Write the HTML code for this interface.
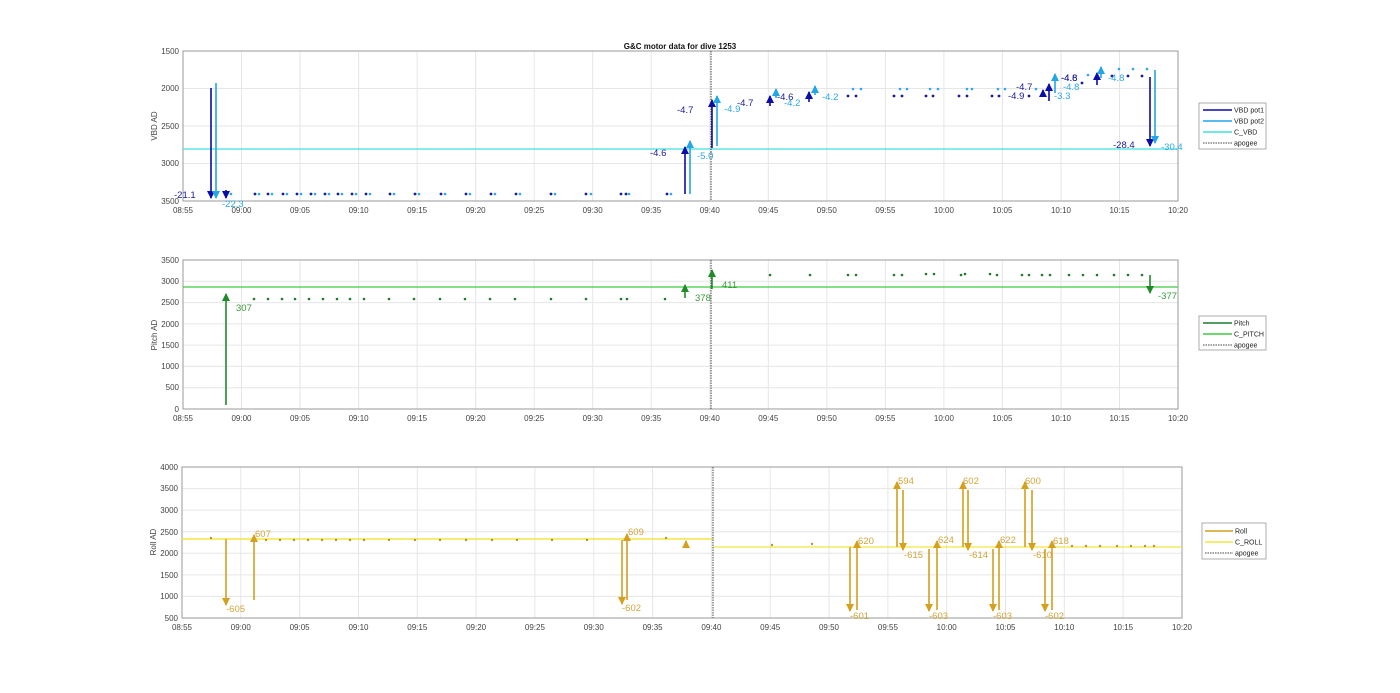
<!DOCTYPE html>
<html><head><meta charset="utf-8"><style>
html,body{margin:0;padding:0;background:#fff;}
svg{display:block;font-family:"Liberation Sans",sans-serif;}
.g{stroke:#e6e6e6;stroke-width:1;}
.ax{fill:none;stroke:#9a9a9a;stroke-width:1;}
.tl{font-size:8px;fill:#444;}
.yl{font-size:8px;fill:#444;text-anchor:end;}
.lg{font-size:7px;fill:#222;}
.db{fill:#1a1a9c;}.lb{fill:#2aa8e8;}
</style></head><body>
<svg width="1400" height="693" viewBox="0 0 1400 693">
<defs>
<marker id="mDB" markerWidth="8" markerHeight="8" refX="7" refY="4" orient="auto" markerUnits="userSpaceOnUse"><path d="M0,0 L8,4 L0,8 z" fill="#0c0ca8"/></marker>
<marker id="mLB" markerWidth="8" markerHeight="8" refX="7" refY="4" orient="auto" markerUnits="userSpaceOnUse"><path d="M0,0 L8,4 L0,8 z" fill="#22a6e6"/></marker>
<marker id="mG" markerWidth="8" markerHeight="8" refX="7" refY="4" orient="auto" markerUnits="userSpaceOnUse"><path d="M0,0 L8,4 L0,8 z" fill="#1f8a2a"/></marker>
<marker id="mR" markerWidth="8" markerHeight="8" refX="7" refY="4" orient="auto" markerUnits="userSpaceOnUse"><path d="M0,0 L8,4 L0,8 z" fill="#d4a01e"/></marker>
</defs>

<text x="680" y="49" font-size="8" font-weight="bold" text-anchor="middle" fill="#111">G&amp;C motor data for dive 1253</text>

<!-- ===== PLOT 1 ===== -->
<g class="g">
<line x1="241.5" y1="51" x2="241.5" y2="201"/><line x1="300" y1="51" x2="300" y2="201"/><line x1="358.6" y1="51" x2="358.6" y2="201"/><line x1="417.1" y1="51" x2="417.1" y2="201"/><line x1="475.6" y1="51" x2="475.6" y2="201"/><line x1="534.2" y1="51" x2="534.2" y2="201"/><line x1="592.7" y1="51" x2="592.7" y2="201"/><line x1="651.2" y1="51" x2="651.2" y2="201"/><line x1="709.8" y1="51" x2="709.8" y2="201"/><line x1="768.3" y1="51" x2="768.3" y2="201"/><line x1="826.8" y1="51" x2="826.8" y2="201"/><line x1="885.4" y1="51" x2="885.4" y2="201"/><line x1="943.9" y1="51" x2="943.9" y2="201"/><line x1="1002.4" y1="51" x2="1002.4" y2="201"/><line x1="1061" y1="51" x2="1061" y2="201"/><line x1="1119.5" y1="51" x2="1119.5" y2="201"/>
<line x1="183" y1="88.5" x2="1178" y2="88.5"/><line x1="183" y1="126" x2="1178" y2="126"/><line x1="183" y1="163.5" x2="1178" y2="163.5"/>
</g>
<rect class="ax" x="183" y="51" width="995" height="150"/>
<text class="yl" x="179" y="54">1500</text><text class="yl" x="179" y="91">2000</text><text class="yl" x="179" y="129">2500</text><text class="yl" x="179" y="166">3000</text><text class="yl" x="179" y="204">3500</text>
<text class="tl" transform="translate(157,126) rotate(-90)" text-anchor="middle">VBD AD</text>
<g class="tl" text-anchor="middle">
<text x="183" y="213">08:55</text><text x="241.5" y="213">09:00</text><text x="300" y="213">09:05</text><text x="358.6" y="213">09:10</text><text x="417.1" y="213">09:15</text><text x="475.6" y="213">09:20</text><text x="534.2" y="213">09:25</text><text x="592.7" y="213">09:30</text><text x="651.2" y="213">09:35</text><text x="709.8" y="213">09:40</text><text x="768.3" y="213">09:45</text><text x="826.8" y="213">09:50</text><text x="885.4" y="213">09:55</text><text x="943.9" y="213">10:00</text><text x="1002.4" y="213">10:05</text><text x="1061" y="213">10:10</text><text x="1119.5" y="213">10:15</text><text x="1178" y="213">10:20</text>
</g>
<line x1="183" y1="149" x2="1178" y2="149" stroke="#40e0e0" stroke-width="1.3"/>
<line x1="711" y1="51" x2="711" y2="201" stroke="#444" stroke-width="1" stroke-dasharray="1.5,1"/>
<!-- dots -->
<g class="db">
<circle cx="255" cy="194" r="1.4"/><circle cx="268" cy="194" r="1.4"/><circle cx="283" cy="194" r="1.4"/><circle cx="297" cy="194" r="1.4"/><circle cx="311" cy="194" r="1.4"/><circle cx="325" cy="194" r="1.4"/><circle cx="338" cy="194" r="1.4"/><circle cx="352" cy="194" r="1.4"/><circle cx="366" cy="194" r="1.4"/><circle cx="390" cy="194" r="1.4"/><circle cx="415" cy="194" r="1.4"/><circle cx="441" cy="194" r="1.4"/><circle cx="466" cy="194" r="1.4"/><circle cx="491" cy="194" r="1.4"/><circle cx="516" cy="194" r="1.4"/><circle cx="551" cy="194" r="1.4"/><circle cx="586" cy="194" r="1.4"/><circle cx="621" cy="194" r="1.4"/><circle cx="626" cy="194" r="1.4"/><circle cx="667" cy="194" r="1.4"/>
<circle cx="848" cy="96" r="1.4"/><circle cx="856" cy="96" r="1.4"/><circle cx="894" cy="96" r="1.4"/><circle cx="902" cy="96" r="1.4"/><circle cx="926" cy="96" r="1.4"/><circle cx="933" cy="96" r="1.4"/><circle cx="959" cy="96" r="1.4"/><circle cx="967" cy="96" r="1.4"/><circle cx="992" cy="96" r="1.4"/><circle cx="999" cy="96" r="1.4"/><circle cx="1029" cy="96" r="1.4"/><circle cx="1082" cy="83" r="1.4"/><circle cx="1112" cy="76" r="1.4"/><circle cx="1128" cy="76" r="1.4"/><circle cx="1142" cy="76" r="1.4"/>
</g>
<g class="lb">
<circle cx="259" cy="194" r="1.3"/><circle cx="272" cy="194" r="1.3"/><circle cx="287" cy="194" r="1.3"/><circle cx="301" cy="194" r="1.3"/><circle cx="315" cy="194" r="1.3"/><circle cx="329" cy="194" r="1.3"/><circle cx="342" cy="194" r="1.3"/><circle cx="356" cy="194" r="1.3"/><circle cx="370" cy="194" r="1.3"/><circle cx="394" cy="194" r="1.3"/><circle cx="419" cy="194" r="1.3"/><circle cx="445" cy="194" r="1.3"/><circle cx="470" cy="194" r="1.3"/><circle cx="495" cy="194" r="1.3"/><circle cx="520" cy="194" r="1.3"/><circle cx="555" cy="194" r="1.3"/><circle cx="591" cy="194" r="1.3"/><circle cx="629" cy="194" r="1.3"/><circle cx="671" cy="194" r="1.3"/><circle cx="231" cy="194" r="1.3"/>
<circle cx="853" cy="89" r="1.3"/><circle cx="861" cy="89" r="1.3"/><circle cx="900" cy="89" r="1.3"/><circle cx="907" cy="89" r="1.3"/><circle cx="930" cy="89" r="1.3"/><circle cx="938" cy="89" r="1.3"/><circle cx="967" cy="89" r="1.3"/><circle cx="972" cy="89" r="1.3"/><circle cx="998" cy="89" r="1.3"/><circle cx="1005" cy="89" r="1.3"/><circle cx="1036" cy="89" r="1.3"/><circle cx="1088" cy="75" r="1.3"/><circle cx="1119" cy="69" r="1.3"/><circle cx="1133" cy="69" r="1.3"/><circle cx="1147" cy="69" r="1.3"/>
</g>
<!-- arrows pot1 -->
<g stroke="#0c0ca8" stroke-width="1.6" marker-end="url(#mDB)">
<line x1="211" y1="88" x2="211" y2="198"/>
<line x1="226" y1="190" x2="226" y2="198"/>
<line x1="685" y1="194" x2="685" y2="147"/>
<line x1="712" y1="148" x2="712" y2="100"/>
<line x1="770" y1="106" x2="770" y2="96"/>
<line x1="809" y1="102" x2="809" y2="92"/>
<line x1="1043" y1="96" x2="1043" y2="90"/>
<line x1="1049" y1="101" x2="1049" y2="84"/>
<line x1="1097" y1="85" x2="1097" y2="73"/>
<line x1="1150" y1="77" x2="1150" y2="146"/>
</g>
<g stroke="#22a6e6" stroke-width="1.6" marker-end="url(#mLB)">
<line x1="216" y1="83" x2="216" y2="198"/>
<line x1="690" y1="194" x2="690" y2="141"/>
<line x1="717" y1="146" x2="717" y2="96"/>
<line x1="776" y1="98" x2="776" y2="89"/>
<line x1="815" y1="95" x2="815" y2="86"/>
<line x1="1055" y1="93" x2="1055" y2="74"/>
<line x1="1101" y1="78" x2="1101" y2="67"/>
<line x1="1155" y1="70" x2="1155" y2="143"/>
</g>
<g font-size="9.5" fill="#1a1a9c">
<text x="174" y="198">-21.1</text><text x="650" y="156">-4.6</text><text x="677" y="113">-4.7</text><text x="737" y="106">-4.7</text><text x="777" y="100">-4.6</text><text x="1016" y="90">-4.7</text><text x="1008" y="99">-4.9</text><text x="1061" y="81">-4.8</text><text x="1061" y="81">-4.6</text><text x="1113" y="148">-28.4</text>
</g>
<g font-size="9.5" fill="#2aa8e8">
<text x="222" y="207">-22.3</text><text x="697" y="159">-5.0</text><text x="724" y="112">-4.9</text><text x="784" y="106">-4.2</text><text x="822" y="100">-4.2</text><text x="1054" y="99">-3.3</text><text x="1063" y="90">-4.8</text><text x="1108" y="81">-4.8</text><text x="1161" y="150">-30.4</text>
</g>
<!-- legend 1 -->
<rect x="1199" y="103" width="67" height="46" fill="#fff" stroke="#999" stroke-width="0.8"/>
<line x1="1203" y1="110" x2="1232" y2="110" stroke="#0c0ca8" stroke-width="1.6"/><text class="lg" x="1234" y="112.5">VBD pot1</text>
<line x1="1203" y1="121" x2="1232" y2="121" stroke="#22a6e6" stroke-width="1.6"/><text class="lg" x="1234" y="123.5">VBD pot2</text>
<line x1="1203" y1="132" x2="1232" y2="132" stroke="#40e0e0" stroke-width="1.6"/><text class="lg" x="1234" y="134.5">C_VBD</text>
<line x1="1203" y1="143" x2="1232" y2="143" stroke="#444" stroke-width="1" stroke-dasharray="1.5,1"/><text class="lg" x="1234" y="145.5">apogee</text>

<!-- ===== PLOT 2 ===== -->
<g class="g">
<line x1="241.5" y1="260" x2="241.5" y2="409"/><line x1="300" y1="260" x2="300" y2="409"/><line x1="358.6" y1="260" x2="358.6" y2="409"/><line x1="417.1" y1="260" x2="417.1" y2="409"/><line x1="475.6" y1="260" x2="475.6" y2="409"/><line x1="534.2" y1="260" x2="534.2" y2="409"/><line x1="592.7" y1="260" x2="592.7" y2="409"/><line x1="651.2" y1="260" x2="651.2" y2="409"/><line x1="709.8" y1="260" x2="709.8" y2="409"/><line x1="768.3" y1="260" x2="768.3" y2="409"/><line x1="826.8" y1="260" x2="826.8" y2="409"/><line x1="885.4" y1="260" x2="885.4" y2="409"/><line x1="943.9" y1="260" x2="943.9" y2="409"/><line x1="1002.4" y1="260" x2="1002.4" y2="409"/><line x1="1061" y1="260" x2="1061" y2="409"/><line x1="1119.5" y1="260" x2="1119.5" y2="409"/>
<line x1="183" y1="281.3" x2="1178" y2="281.3"/><line x1="183" y1="302.6" x2="1178" y2="302.6"/><line x1="183" y1="323.9" x2="1178" y2="323.9"/><line x1="183" y1="345.1" x2="1178" y2="345.1"/><line x1="183" y1="366.4" x2="1178" y2="366.4"/><line x1="183" y1="387.7" x2="1178" y2="387.7"/>
</g>
<rect class="ax" x="183" y="260" width="995" height="149"/>
<text class="yl" x="179" y="263">3500</text><text class="yl" x="179" y="284">3000</text><text class="yl" x="179" y="305">2500</text><text class="yl" x="179" y="327">2000</text><text class="yl" x="179" y="348">1500</text><text class="yl" x="179" y="369">1000</text><text class="yl" x="179" y="390">500</text><text class="yl" x="179" y="412">0</text>
<text class="tl" transform="translate(157,335) rotate(-90)" text-anchor="middle">Pitch AD</text>
<g class="tl" text-anchor="middle">
<text x="183" y="421">08:55</text><text x="241.5" y="421">09:00</text><text x="300" y="421">09:05</text><text x="358.6" y="421">09:10</text><text x="417.1" y="421">09:15</text><text x="475.6" y="421">09:20</text><text x="534.2" y="421">09:25</text><text x="592.7" y="421">09:30</text><text x="651.2" y="421">09:35</text><text x="709.8" y="421">09:40</text><text x="768.3" y="421">09:45</text><text x="826.8" y="421">09:50</text><text x="885.4" y="421">09:55</text><text x="943.9" y="421">10:00</text><text x="1002.4" y="421">10:05</text><text x="1061" y="421">10:10</text><text x="1119.5" y="421">10:15</text><text x="1178" y="421">10:20</text>
</g>
<line x1="183" y1="287" x2="1178" y2="287" stroke="#3fcc3f" stroke-width="1.3"/>
<line x1="711" y1="260" x2="711" y2="409" stroke="#444" stroke-width="1" stroke-dasharray="1.5,1"/>
<g fill="#1f7a2a">
<circle cx="254" cy="299" r="1.3"/><circle cx="268" cy="299" r="1.3"/><circle cx="282" cy="299" r="1.3"/><circle cx="295" cy="299" r="1.3"/><circle cx="309" cy="299" r="1.3"/><circle cx="323" cy="299" r="1.3"/><circle cx="337" cy="299" r="1.3"/><circle cx="350" cy="299" r="1.3"/><circle cx="364" cy="299" r="1.3"/><circle cx="389" cy="299" r="1.3"/><circle cx="414" cy="299" r="1.3"/><circle cx="440" cy="299" r="1.3"/><circle cx="465" cy="299" r="1.3"/><circle cx="490" cy="299" r="1.3"/><circle cx="515" cy="299" r="1.3"/><circle cx="551" cy="299" r="1.3"/><circle cx="586" cy="299" r="1.3"/><circle cx="621" cy="299" r="1.3"/><circle cx="627" cy="299" r="1.3"/><circle cx="665" cy="299" r="1.3"/>
<circle cx="770" cy="275" r="1.3"/><circle cx="810" cy="275" r="1.3"/><circle cx="848" cy="275" r="1.3"/><circle cx="856" cy="275" r="1.3"/><circle cx="894" cy="275" r="1.3"/><circle cx="902" cy="275" r="1.3"/><circle cx="926" cy="274" r="1.3"/><circle cx="934" cy="274" r="1.3"/><circle cx="961" cy="275" r="1.3"/><circle cx="965" cy="274" r="1.3"/><circle cx="990" cy="274" r="1.3"/><circle cx="997" cy="275" r="1.3"/><circle cx="1022" cy="275" r="1.3"/><circle cx="1029" cy="275" r="1.3"/><circle cx="1042" cy="275" r="1.3"/><circle cx="1050" cy="275" r="1.3"/><circle cx="1069" cy="275" r="1.3"/><circle cx="1083" cy="275" r="1.3"/><circle cx="1097" cy="275" r="1.3"/><circle cx="1114" cy="275" r="1.3"/><circle cx="1128" cy="275" r="1.3"/><circle cx="1142" cy="275" r="1.3"/>
</g>
<g stroke="#1f8a2a" stroke-width="1.6" marker-end="url(#mG)">
<line x1="226" y1="405" x2="226" y2="294"/>
<line x1="685" y1="298" x2="685" y2="285"/>
<line x1="712" y1="289" x2="712" y2="270"/>
<line x1="1150" y1="275" x2="1150" y2="293"/>
</g>
<g font-size="9.5" fill="#3a9a3a">
<text x="236" y="311">307</text><text x="695" y="301">378</text><text x="722" y="288">411</text><text x="1158" y="299">-377</text>
</g>
<rect x="1199" y="316" width="67" height="34" fill="#fff" stroke="#999" stroke-width="0.8"/>
<line x1="1203" y1="323" x2="1232" y2="323" stroke="#1f7a2a" stroke-width="1.6"/><text class="lg" x="1234" y="325.5">Pitch</text>
<line x1="1203" y1="334" x2="1232" y2="334" stroke="#3fcc3f" stroke-width="1.6"/><text class="lg" x="1234" y="336.5">C_PITCH</text>
<line x1="1203" y1="345" x2="1232" y2="345" stroke="#444" stroke-width="1" stroke-dasharray="1.5,1"/><text class="lg" x="1234" y="347.5">apogee</text>

<!-- ===== PLOT 3 ===== -->
<g class="g">
<line x1="240.8" y1="467" x2="240.8" y2="618"/><line x1="299.6" y1="467" x2="299.6" y2="618"/><line x1="358.5" y1="467" x2="358.5" y2="618"/><line x1="417.3" y1="467" x2="417.3" y2="618"/><line x1="476.1" y1="467" x2="476.1" y2="618"/><line x1="534.9" y1="467" x2="534.9" y2="618"/><line x1="593.8" y1="467" x2="593.8" y2="618"/><line x1="652.6" y1="467" x2="652.6" y2="618"/><line x1="711.4" y1="467" x2="711.4" y2="618"/><line x1="770.2" y1="467" x2="770.2" y2="618"/><line x1="829" y1="467" x2="829" y2="618"/><line x1="887.9" y1="467" x2="887.9" y2="618"/><line x1="946.7" y1="467" x2="946.7" y2="618"/><line x1="1005.5" y1="467" x2="1005.5" y2="618"/><line x1="1064.3" y1="467" x2="1064.3" y2="618"/><line x1="1123.1" y1="467" x2="1123.1" y2="618"/>
<line x1="182" y1="488.6" x2="1182" y2="488.6"/><line x1="182" y1="510.1" x2="1182" y2="510.1"/><line x1="182" y1="531.7" x2="1182" y2="531.7"/><line x1="182" y1="553.3" x2="1182" y2="553.3"/><line x1="182" y1="574.9" x2="1182" y2="574.9"/><line x1="182" y1="596.4" x2="1182" y2="596.4"/>
</g>
<rect class="ax" x="182" y="467" width="1000" height="151"/>
<text class="yl" x="178" y="470">4000</text><text class="yl" x="178" y="491">3500</text><text class="yl" x="178" y="513">3000</text><text class="yl" x="178" y="535">2500</text><text class="yl" x="178" y="556">2000</text><text class="yl" x="178" y="578">1500</text><text class="yl" x="178" y="599">1000</text><text class="yl" x="178" y="621">500</text>
<text class="tl" transform="translate(156,542) rotate(-90)" text-anchor="middle">Roll AD</text>
<g class="tl" text-anchor="middle">
<text x="182" y="630">08:55</text><text x="240.8" y="630">09:00</text><text x="299.6" y="630">09:05</text><text x="358.5" y="630">09:10</text><text x="417.3" y="630">09:15</text><text x="476.1" y="630">09:20</text><text x="534.9" y="630">09:25</text><text x="593.8" y="630">09:30</text><text x="652.6" y="630">09:35</text><text x="711.4" y="630">09:40</text><text x="770.2" y="630">09:45</text><text x="829" y="630">09:50</text><text x="887.9" y="630">09:55</text><text x="946.7" y="630">10:00</text><text x="1005.5" y="630">10:05</text><text x="1064.3" y="630">10:10</text><text x="1123.1" y="630">10:15</text><text x="1182" y="630">10:20</text>
</g>
<line x1="182" y1="539" x2="713" y2="539" stroke="#f2e640" stroke-width="1.5"/>
<line x1="713" y1="547" x2="1182" y2="547" stroke="#f2e640" stroke-width="1.3"/>
<line x1="713" y1="467" x2="713" y2="618" stroke="#444" stroke-width="1" stroke-dasharray="1.5,1"/>
<g fill="#b8962a">
<circle cx="211" cy="538" r="1.2"/><circle cx="266" cy="540" r="1.2"/><circle cx="280" cy="540" r="1.2"/><circle cx="294" cy="540" r="1.2"/><circle cx="308" cy="540" r="1.2"/><circle cx="322" cy="540" r="1.2"/><circle cx="336" cy="540" r="1.2"/><circle cx="350" cy="540" r="1.2"/><circle cx="364" cy="540" r="1.2"/><circle cx="389" cy="540" r="1.2"/><circle cx="415" cy="540" r="1.2"/><circle cx="440" cy="540" r="1.2"/><circle cx="466" cy="540" r="1.2"/><circle cx="492" cy="540" r="1.2"/><circle cx="517" cy="540" r="1.2"/><circle cx="552" cy="540" r="1.2"/><circle cx="587" cy="540" r="1.2"/><circle cx="666" cy="538" r="1.2"/>
<circle cx="772" cy="545" r="1.2"/><circle cx="812" cy="544" r="1.2"/><circle cx="1072" cy="546" r="1.2"/><circle cx="1086" cy="546" r="1.2"/><circle cx="1100" cy="546" r="1.2"/><circle cx="1117" cy="546" r="1.2"/><circle cx="1131" cy="546" r="1.2"/><circle cx="1145" cy="546" r="1.2"/><circle cx="1154" cy="546" r="1.2"/>
</g>
<g stroke="#d4a01e" stroke-width="1.6" marker-end="url(#mR)">
<line x1="226" y1="539" x2="226" y2="605"/>
<line x1="254" y1="600" x2="254" y2="535"/>
<line x1="622" y1="540" x2="622" y2="604"/>
<line x1="627" y1="600" x2="627" y2="534"/>
<line x1="686" y1="548" x2="686" y2="541"/>
<line x1="850" y1="547" x2="850" y2="611"/>
<line x1="857" y1="610" x2="857" y2="541"/>
<line x1="897" y1="547" x2="897" y2="482"/>
<line x1="903" y1="490" x2="903" y2="550"/>
<line x1="929" y1="549" x2="929" y2="611"/>
<line x1="937" y1="610" x2="937" y2="541"/>
<line x1="963" y1="547" x2="963" y2="482"/>
<line x1="968" y1="490" x2="968" y2="550"/>
<line x1="993" y1="549" x2="993" y2="611"/>
<line x1="999" y1="610" x2="999" y2="541"/>
<line x1="1025" y1="547" x2="1025" y2="482"/>
<line x1="1032" y1="490" x2="1032" y2="550"/>
<line x1="1045" y1="549" x2="1045" y2="611"/>
<line x1="1052" y1="610" x2="1052" y2="541"/>
</g>
<g font-size="9.5" fill="#d4a43a">
<text x="226" y="612">-605</text><text x="255" y="537">607</text><text x="622" y="611">-602</text><text x="628" y="535">609</text>
<text x="850" y="619">-601</text><text x="858" y="544">620</text><text x="898" y="484">594</text><text x="904" y="558">-615</text>
<text x="929" y="619">-603</text><text x="938" y="543">624</text><text x="963" y="484">602</text><text x="969" y="558">-614</text>
<text x="993" y="619">-603</text><text x="1000" y="543">622</text><text x="1025" y="484">600</text><text x="1033" y="558">-610</text>
<text x="1045" y="619">-602</text><text x="1053" y="544">618</text>
</g>
<rect x="1202" y="523" width="64" height="36" fill="#fff" stroke="#999" stroke-width="0.8"/>
<line x1="1205" y1="531" x2="1233" y2="531" stroke="#d4a01e" stroke-width="1.6"/><text class="lg" x="1235" y="533.5">Roll</text>
<line x1="1205" y1="542" x2="1233" y2="542" stroke="#f2e640" stroke-width="1.6"/><text class="lg" x="1235" y="544.5">C_ROLL</text>
<line x1="1205" y1="553" x2="1233" y2="553" stroke="#444" stroke-width="1" stroke-dasharray="1.5,1"/><text class="lg" x="1235" y="555.5">apogee</text>
</svg>
</body></html>
